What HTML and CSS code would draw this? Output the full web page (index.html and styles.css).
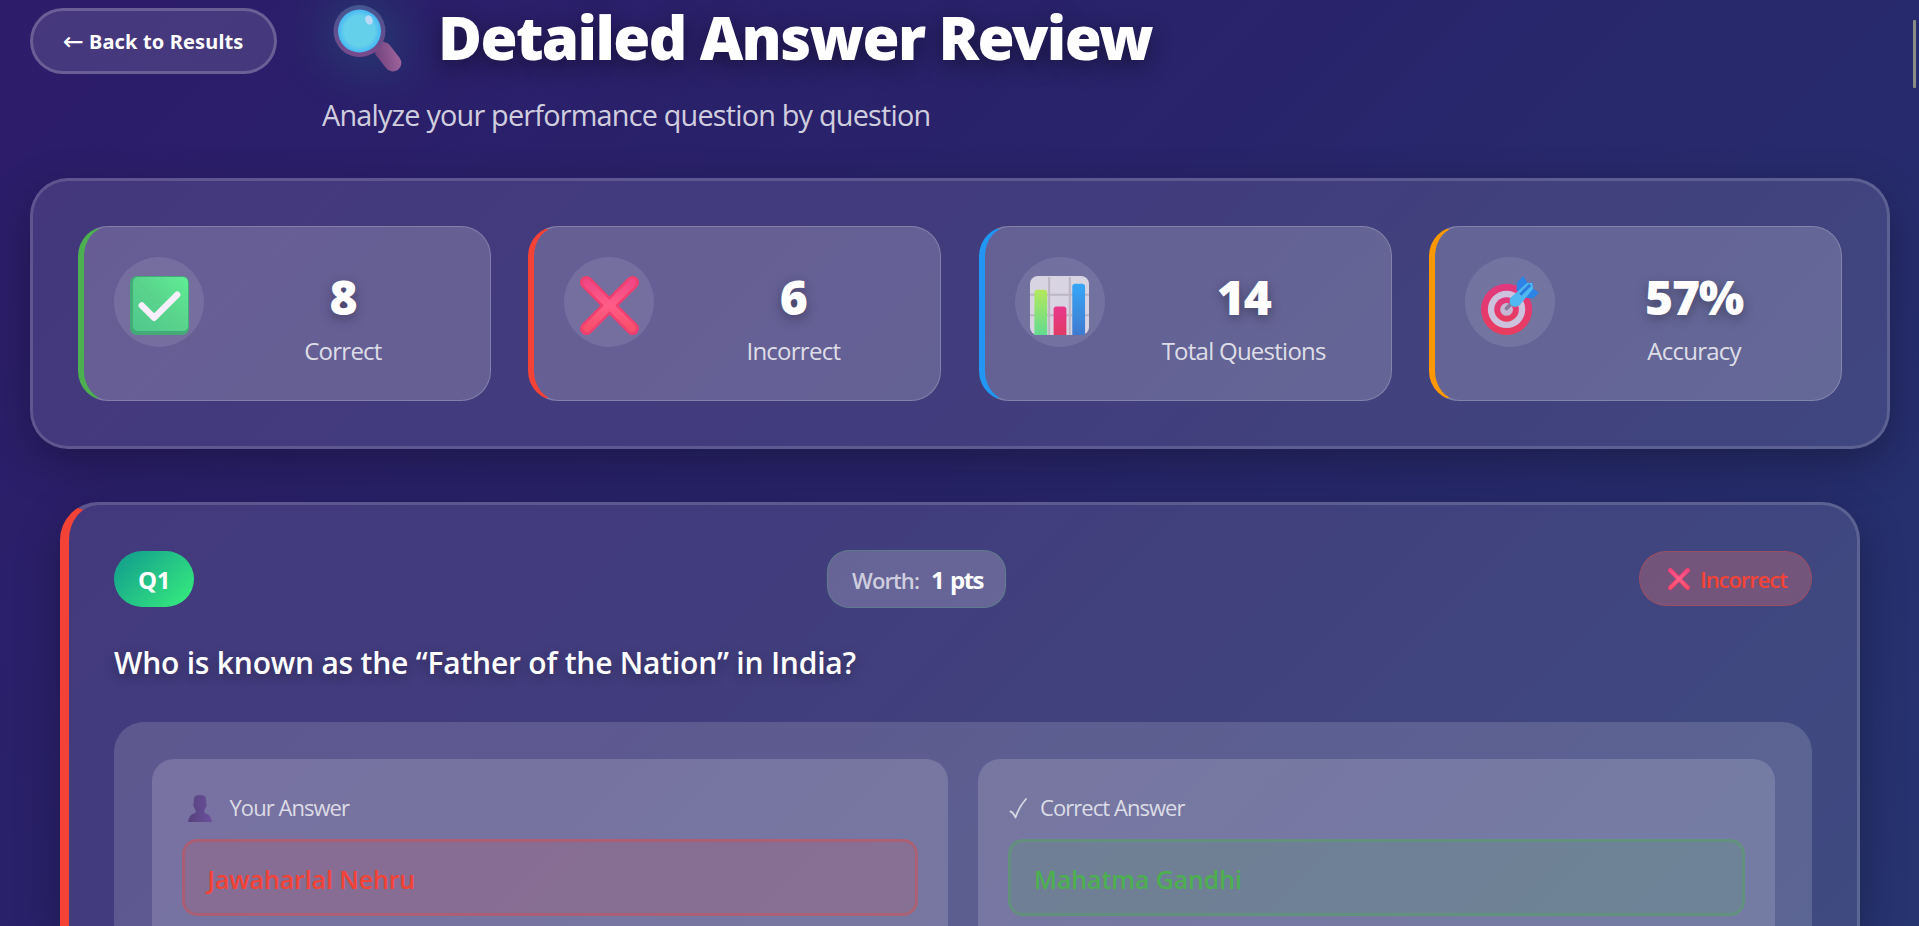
FILE: index.html
```html
<!DOCTYPE html>
<html lang="en">
<head>
<meta charset="utf-8">
<title>Detailed Answer Review</title>
<link rel="stylesheet" href="styles.css">
</head>
<body>
<svg class="defs" width="0" height="0" aria-hidden="true">
  <defs>
    <linearGradient id="crossFill" x1="0" y1="0" x2="0" y2="1"><stop offset="0" stop-color="#f04885"/><stop offset=".5" stop-color="#ff5d88"/><stop offset="1" stop-color="#f84f6a"/></linearGradient>
    <linearGradient id="checkFill" x1="0" y1="1" x2="1" y2="0"><stop offset="0" stop-color="#4fc88c"/><stop offset=".5" stop-color="#59d38c"/><stop offset="1" stop-color="#60ee95"/></linearGradient>
    <linearGradient id="rimFill" x1="0" y1="0" x2="0" y2="1"><stop offset="0" stop-color="#435690"/><stop offset="1" stop-color="#7a4a8c"/></linearGradient>
    <linearGradient id="handleFill" x1="0" y1="0" x2="1" y2="1"><stop offset="0" stop-color="#6d3f7b"/><stop offset="1" stop-color="#a3679f"/></linearGradient>
    <linearGradient id="greenBar" x1="0" y1="0" x2="0" y2="1"><stop offset="0" stop-color="#b4e85c"/><stop offset="1" stop-color="#62dc90"/></linearGradient>
    <linearGradient id="blueBar" x1="0" y1="0" x2="0" y2="1"><stop offset="0" stop-color="#36a6f7"/><stop offset="1" stop-color="#3e7bd0"/></linearGradient>
    <linearGradient id="pinkBar" x1="0" y1="0" x2="0" y2="1"><stop offset="0" stop-color="#e9388c"/><stop offset="1" stop-color="#e03a66"/></linearGradient>
    <radialGradient id="lensFill"><stop offset=".7" stop-color="#65d0ea"/><stop offset="1" stop-color="#46b8f4"/></radialGradient>
    <linearGradient id="personFill" x1="0" y1="0" x2="1" y2="0"><stop offset="0" stop-color="#55427d"/><stop offset="1" stop-color="#6b4f9c"/></linearGradient>
    <linearGradient id="ringFill" x1="0" y1="0" x2="0" y2="1"><stop offset="0" stop-color="#e0387e"/><stop offset="1" stop-color="#ea3c5e"/></linearGradient>
    <symbol id="cross" viewBox="0 0 60 60"><path d="M6.500 6.500 53.500 53.500M53.500 6.500 6.500 53.500" stroke="#ee3f70" stroke-width="13" stroke-linecap="round" fill="none"/><path d="M7 7 53 53M53 7 7.100 53" stroke="url(#crossFill)" stroke-width="8" stroke-linecap="round" fill="none"/></symbol>
  </defs>
</svg>
<main class="page">
  <header class="header">
    <button class="back"><span class="back-arrow">←</span><span class="back-text">Back to Results</span></button>
    <div class="heading">
      <h1 class="title">
        <svg class="lens" viewBox="0 0 66 66"><rect x="44" y="36" width="17" height="33" rx="8.5" transform="rotate(-38 52 50)" fill="url(#handleFill)"/><circle cx="25.500" cy="26" r="26" fill="url(#rimFill)"/><circle cx="25.500" cy="26" r="21.500" fill="url(#lensFill)"/><ellipse cx="35" cy="15" rx="3.700" ry="4.800" transform="rotate(-25 35 15)" fill="#b9d9f6"/></svg>
        <span class="title-text">Detailed Answer Review</span>
      </h1>
      <p class="subtitle">Analyze your performance question by question</p>
    </div>
  </header>

  <section class="stats">
    <article class="stat stat-correct">
      <div class="stat-icon"><svg viewBox="0 0 60 60"><rect width="60" height="60" rx="7" fill="#44ab78"/><rect x="3" y="1" width="56" height="55" rx="5" fill="url(#checkFill)"/><path d="M12 30 24.500 42.500 48 19" fill="none" stroke="#fbeffc" stroke-width="6.500" stroke-linecap="round" stroke-linejoin="round"/></svg></div>
      <div class="stat-body"><div class="stat-value">8</div><div class="stat-label">Correct</div></div>
    </article>
    <article class="stat stat-incorrect">
      <div class="stat-icon"><svg><use href="#cross"/></svg></div>
      <div class="stat-body"><div class="stat-value">6</div><div class="stat-label">Incorrect</div></div>
    </article>
    <article class="stat stat-total">
      <div class="stat-icon"><svg viewBox="0 0 60 60"><rect width="60" height="60" rx="8" fill="#d9d4e2"/><path d="M19.500 1V60M40.500 1V60M0 19H60M0 40H60" stroke="#bcb5c3" stroke-width="2"/><path d="M4.500 60V17a3 3 0 0 1 3-3h7a3 3 0 0 1 3 3V60z" fill="url(#greenBar)"/><path d="M24 60V34a3 3 0 0 1 3-3h7a3 3 0 0 1 3 3V60z" fill="url(#pinkBar)"/><path d="M43 60V11a3 3 0 0 1 3-3h7a3 3 0 0 1 3 3V60z" fill="url(#blueBar)"/></svg></div>
      <div class="stat-body"><div class="stat-value">14</div><div class="stat-label">Total Questions</div></div>
    </article>
    <article class="stat stat-accuracy">
      <div class="stat-icon"><svg viewBox="0 0 60 60"><circle cx="26" cy="34" r="26" fill="url(#ringFill)"/><circle cx="26" cy="34" r="19" fill="#cdc2dd"/><circle cx="26" cy="34" r="12.500" fill="url(#ringFill)"/><circle cx="26" cy="34" r="6.500" fill="#c6b7d2"/><path d="M26 33 32 27" stroke="#8b7a9c" stroke-width="4" stroke-linecap="round"/><path d="M36 14 37 6 43 0 48 8 53 6 52 12 59 17 53 23 45 22z" fill="#2d83e6"/><path d="M30 22Q28 27 31 30 34 33 39 30L53 13 52 7 47 7z" fill="#50b8f1"/><path d="M40 19 50 9" stroke="#2b7bdd" stroke-width="3"/></svg></div>
      <div class="stat-body"><div class="stat-value">57%</div><div class="stat-label">Accuracy</div></div>
    </article>
  </section>

  <section class="question">
    <div class="question-top">
      <span class="badge">Q1</span>
      <span class="worth"><span class="worth-label">Worth:</span><span class="worth-value">1 pts</span></span>
      <span class="status"><svg><use href="#cross"/></svg><span>Incorrect</span></span>
    </div>
    <h2 class="question-text"><span>Who is known as the “Father of the Nation” in India?</span></h2>
    <div class="answers">
      <div class="answer">
        <div class="answer-label"><svg class="person" viewBox="0 0 24 27"><path d="M6 4Q6 0 12 0t6 4l.3 4q1 1 0 3.500L16 16q0 1.500 2 2.500 5 1.500 6 8.500H0q1-7 6-8.500 2-1 2-2.500L5.700 11.500q-1-2.500 0-3.500z" fill="url(#personFill)"/></svg><span class="label-text">Your Answer</span></div>
        <div class="answer-box wrong"><span>Jawaharlal Nehru</span></div>
      </div>
      <div class="answer">
        <div class="answer-label"><svg class="tick" viewBox="0 0 18 21"><path d="M1.500 13.500Q4 14 6.500 19.500 10 9 17 1" fill="none" stroke="#d9d8e6" stroke-width="1.800" stroke-linecap="round" stroke-linejoin="round"/></svg><span class="label-text">Correct Answer</span></div>
        <div class="answer-box right"><span>Mahatma Gandhi</span></div>
      </div>
    </div>
  </section>
</main>
<div class="scroll-thumb"></div>
</body>
</html>
```
FILE: styles.css
```css
* { box-sizing: border-box; }
html, body { height: 100%; }
body {
  margin: 0;
  overflow: hidden;
  color: #fff;
  font-family: "Open Sans", "Noto Sans", sans-serif;
  background: linear-gradient(135deg, #2d1c6a 0%, #28246b 48%, #263470 100%);
}
.defs { position: absolute; }
svg { display: block; overflow: visible; }
.page { display: flex; flex-direction: column; height: 926px; padding: 0 29px 0 30px; }
.header { display: flex; flex: none; gap: 45px; height: 178px; }
.back {
  display: flex; align-items: center; gap: 5px;
  width: 247px; height: 66px; margin-top: 8px; padding: 1px 0 0 30px;
  border: 3px solid rgba(255,255,255,.2); border-radius: 33px;
  background: rgba(255,255,255,.12);
  color: #fff; font: 700 20px/1 "Noto Sans", sans-serif; letter-spacing: .15px; white-space: nowrap;
}
.back-arrow { font-family: "DejaVu Sans", sans-serif; font-weight: 400; font-size: 25px; letter-spacing: 0; }
.title { display: flex; margin: 5px 0 0 12px; height: 70px; font-family: "Noto Sans", "Open Sans", sans-serif; font-size: 60px; font-weight: 900; line-height: 64px; }
.lens { width: 66px; height: 66px; flex: none; filter: drop-shadow(0 0 28px rgba(17,153,142,.45)); }
.title-text { margin-left: 38px; white-space: nowrap; letter-spacing: -1.62px; text-shadow: 0 6px 22px rgba(0,0,0,.45); }
.subtitle { margin: 20px 0 0; font-size: 28.8px; line-height: 40px; color: rgba(255,255,255,.8); letter-spacing: -.79px; white-space: nowrap; }

.stats {
  display: grid; flex: none; grid-template-columns: repeat(4, 1fr); gap: 37.5px;
  height: 271px; padding: 45px;
  border: 3px solid rgba(255,255,255,.15); border-radius: 38px;
  background: rgba(245,245,255,.12);
  box-shadow: 0 15px 45px rgba(0,0,0,.3);
}
.stat {
  display: flex; gap: 22px; height: 175px; padding: 30px;
  border: 1px solid rgba(255,255,255,.2); border-left: 6px solid; border-radius: 30px;
  background: rgba(255,255,255,.19);
}
.stat-correct { border-left-color: #4caf50; }
.stat-incorrect { border-left-color: #f44336; }
.stat-total { border-left-color: #2196f3; }
.stat-accuracy { border-left-color: #ff9800; }
.stat-icon { flex: none; width: 90px; height: 90px; padding: 19px 0 0 15.5px; border-radius: 50%; background: rgba(255,255,255,.1); }
.stat-icon svg { width: 59px; height: 59px; }
.stat-body { flex: 1; text-align: center; white-space: nowrap; }
.stat-value { margin-top: 12px; font-family: "Noto Sans", "Open Sans", sans-serif; font-size: 48px; font-weight: 900; line-height: 56px; letter-spacing: -1.2px; text-shadow: 0 4px 12px rgba(0,0,0,.3); }
.stat-label { margin-top: 9px; font-size: 24px; line-height: 34px; letter-spacing: -.75px; color: rgba(255,255,255,.8); }

.question {
  flex: 1; min-height: 0; margin: 53px 30px 0 30px; padding: 46px 45px 0;
  border: 3px solid rgba(255,255,255,.15); border-left: 9px solid #f44336; border-bottom: 0;
  border-radius: 38px 38px 0 0;
  background: rgba(245,245,255,.12);
  box-shadow: 0 15px 45px rgba(0,0,0,.3);
}
.question-top { display: flex; justify-content: space-between; align-items: center; height: 58px; margin-top: -1px; }
.badge { display: grid; place-items: center; width: 80px; height: 56px; border-radius: 28px; background: linear-gradient(135deg, #11998e, #38ef7d); font-size: 24px; font-weight: 700; letter-spacing: -.5px; }
.worth { display: flex; align-items: center; gap: 12px; width: 179px; height: 58px; padding: 1px 0 0 24px; border: 1px solid rgba(80,170,120,.35); border-radius: 22px; background: rgba(255,255,255,.2); white-space: nowrap; }
.worth-label { font-size: 22px; font-weight: 600; letter-spacing: -.9px; color: rgba(255,255,255,.7); }
.worth-value { font-size: 24px; font-weight: 700; letter-spacing: -1.5px; word-spacing: 2px; }
.status { display: flex; align-items: center; gap: 10px; width: 173px; height: 55px; margin-top: -1px; padding-left: 28px; border: 1px solid rgba(244,67,54,.3); border-radius: 28px; background: linear-gradient(rgba(244,67,54,.2), rgba(244,67,54,.2)), rgba(255,255,255,.1); color: #f44336; font-size: 22px; font-weight: 600; letter-spacing: -1.05px; white-space: nowrap; }
.status svg { width: 22px; height: 22px; }
.question-text { margin: 35px 0 0; height: 79px; font-size: 30px; line-height: 40px; font-weight: 600; letter-spacing: -.21px; white-space: nowrap; text-shadow: 0 4px 12px rgba(0,0,0,.3); }
.answers { display: grid; grid-template-columns: 1fr 1fr; gap: 30px; height: 204px; padding: 37px 37.5px 0; border-radius: 30px 30px 0 0; background: rgba(255,255,255,.15); }
.answer { height: 167px; padding: 30px 30px 0; border-radius: 22px 22px 0 0; background: rgba(255,255,255,.16); }
.answer-label { display: flex; align-items: center; height: 38px; color: rgba(255,255,255,.75); font-size: 22px; white-space: nowrap; }
.label-text { margin-top: -2px; letter-spacing: -.95px; }
.person { width: 24px; height: 27px; margin: 0 18px 0 6px; }
.tick { width: 18px; height: 21px; margin: 0 13px 0 1px; }
.answer-box { display: flex; align-items: center; height: 77px; margin-top: 12px; padding: 2px 0 0 23px; border: 3px solid; border-radius: 15px; font-size: 25px; font-weight: 600; letter-spacing: -.12px; white-space: nowrap; }
.wrong { color: #f44336; border-color: rgba(244,67,54,.33); background: rgba(244,67,54,.13); }
.right { color: #4caf50; border-color: rgba(76,175,80,.36); background: rgba(76,175,80,.15); }
.scroll-thumb { position: absolute; top: 20px; right: 3px; width: 3px; height: 68px; background: #8b8b86; border-radius: 1px; }
```
